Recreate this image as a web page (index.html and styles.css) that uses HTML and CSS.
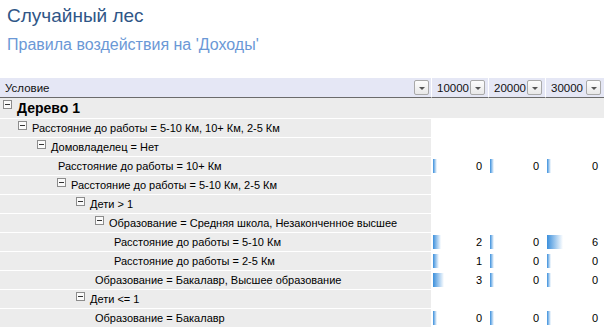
FILE: index.html
```html
<!DOCTYPE html>
<html lang="ru">
<head>
    <meta charset="UTF-8">
    <title>Случайный лес</title>
    <link rel="stylesheet" href="styles.css">
</head>
<body>
    <div class="page-head">
        <h1>Случайный лес</h1>
        <h2>Правила воздействия на 'Доходы'</h2>
    </div>

    <div class="grid">
        <!-- заголовок -->
        <div class="hcell cond-head">Условие <span class="drop"></span></div>
        <div class="hcell">10000 <span class="drop"></span></div>
        <div class="hcell">20000 <span class="drop"></span></div>
        <div class="hcell">30000 <span class="drop"></span></div>

        <div class="row root">
            <div class="cond"><span class="tog"></span><b>Дерево 1</b></div>
            <div class="val"></div><div class="val"></div><div class="val"></div>
        </div>

        <div class="row">
            <div class="cond lv1"><span class="tog"></span>Расстояние до работы = 5-10 Км, 10+ Км, 2-5 Км</div>
            <div class="val"></div><div class="val"></div><div class="val"></div>
        </div>
        <div class="row">
            <div class="cond lv2"><span class="tog"></span>Домовладелец = Нет</div>
            <div class="val"></div><div class="val"></div><div class="val"></div>
        </div>
        <div class="row">
            <div class="cond lv3 leaf">Расстояние до работы = 10+ Км</div>
            <div class="val"><span class="bar" style="width:4px"></span>0</div>
            <div class="val"><span class="bar" style="width:4px"></span>0</div>
            <div class="val"><span class="bar" style="width:4px"></span>0</div>
        </div>
        <div class="row">
            <div class="cond lv3"><span class="tog"></span>Расстояние до работы = 5-10 Км, 2-5 Км</div>
            <div class="val"></div><div class="val"></div><div class="val"></div>
        </div>
        <div class="row">
            <div class="cond lv4"><span class="tog"></span>Дети &gt; 1</div>
            <div class="val"></div><div class="val"></div><div class="val"></div>
        </div>
        <div class="row">
            <div class="cond lv5"><span class="tog"></span>Образование = Средняя школа, Незаконченное высшее</div>
            <div class="val"></div><div class="val"></div><div class="val"></div>
        </div>
        <div class="row">
            <div class="cond lv6 leaf">Расстояние до работы = 5-10 Км</div>
            <div class="val"><span class="bar" style="width:8px"></span>2</div>
            <div class="val"><span class="bar" style="width:4px"></span>0</div>
            <div class="val"><span class="bar" style="width:16px"></span>6</div>
        </div>
        <div class="row">
            <div class="cond lv6 leaf">Расстояние до работы = 2-5 Км</div>
            <div class="val"><span class="bar" style="width:6px"></span>1</div>
            <div class="val"><span class="bar" style="width:4px"></span>0</div>
            <div class="val"><span class="bar" style="width:4px"></span>0</div>
        </div>
        <div class="row">
            <div class="cond lv5 leaf">Образование = Бакалавр, Высшее образование</div>
            <div class="val"><span class="bar" style="width:11px"></span>3</div>
            <div class="val"><span class="bar" style="width:4px"></span>0</div>
            <div class="val"><span class="bar" style="width:4px"></span>0</div>
        </div>
        <div class="row">
            <div class="cond lv4"><span class="tog"></span>Дети &lt;= 1</div>
            <div class="val"></div><div class="val"></div><div class="val"></div>
        </div>
        <div class="row">
            <div class="cond lv5 leaf">Образование = Бакалавр</div>
            <div class="val"><span class="bar" style="width:4px"></span>0</div>
            <div class="val"><span class="bar" style="width:4px"></span>0</div>
            <div class="val"><span class="bar" style="width:4px"></span>0</div>
        </div>
    </div>
</body>
</html>
```

FILE: styles.css
```css
body {
    margin: 0;
    font-family: "Liberation Sans", Arial, sans-serif;
    font-size: 11px;
    color: #000;
    background: #fff;
}

.page-head {
    padding: 5px 7px 0 7px;
    height: 73px;
    box-sizing: border-box;
}

.page-head h1 {
    margin: 0;
    font-size: 19px;
    font-weight: normal;
    color: #2f5687;
    line-height: 22px;
}

.page-head h2 {
    margin: 8px 0 0 0;
    font-size: 16px;
    font-weight: normal;
    color: #6b98d6;
    line-height: 19px;
}

.grid {
    display: grid;
    grid-template-columns: 431px 57px 57px 59px;
}

/* строка заголовка */
.hcell {
    height: 19px;
    margin-top: 5px;
    background: #e5e7f5;
    border-bottom: 1px solid #6b6b6b;
    border-left: 1px solid #fff;
    display: flex;
    align-items: center;
    justify-content: space-between;
    padding: 0 3px 0 5px;
    font-size: 11.5px;
    color: #111;
}

.hcell.cond-head {
    border-left: none;
    padding-right: 2px;
}

.drop {
    width: 13px;
    height: 13px;
    border: 1px solid #a9a9a9;
    border-radius: 2px;
    background: linear-gradient(#fdfdfd, #e8e8e8);
    position: relative;
}

.drop::after {
    content: "";
    position: absolute;
    left: 4px;
    top: 6px;
    border-left: 3px solid transparent;
    border-right: 3px solid transparent;
    border-top: 3px solid #555;
}

/* строки дерева */
.row {
    display: contents;
}

.cond {
    height: 18px;
    margin-bottom: 1px;
    background: #ececec;
    display: flex;
    align-items: center;
    white-space: nowrap;
    padding-left: 3px;
}

.val {
    height: 18px;
    margin-bottom: 1px;
    background: #fff;
    display: flex;
    align-items: center;
    justify-content: space-between;
    padding: 0 6px 0 2px;
}

.root .cond,
.root .val {
    height: 20px;
    background: #ececec;
}

.root b {
    font-size: 14px;
}

.lv1 { padding-left: 18px; }
.lv2 { padding-left: 37px; }
.lv3 { padding-left: 57px; }
.lv4 { padding-left: 76px; }
.lv5 { padding-left: 95px; }
.lv6 { padding-left: 114px; }

.lv3.leaf { padding-left: 58px; }

/* кнопка свернуть */
.tog {
    width: 7px;
    height: 7px;
    border: 1px solid #8c8c8c;
    background: #fafafa;
    margin-right: 5px;
    position: relative;
    flex: none;
    align-self: flex-start;
    margin-top: 2px;
}

.tog::after {
    content: "";
    position: absolute;
    left: 1px;
    right: 1px;
    top: 3px;
    height: 1px;
    background: #333;
}

.bar {
    height: 14px;
    background: linear-gradient(to right, #3b8fdc, #ffffff);
}
```
